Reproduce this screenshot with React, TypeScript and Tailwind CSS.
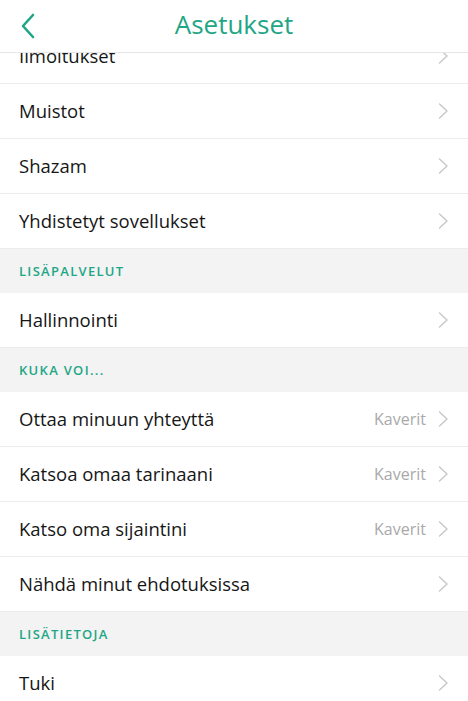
import React from "react";

const font = { fontFamily: '"Open Sans", "Noto Sans", sans-serif' };

function Chevron() {
  return (
    <svg width="11" height="16" viewBox="0 0 11 16" fill="none" className="shrink-0">
      <path d="M1.5 1 L9 8 L1.5 15" stroke="#c7c7c7" strokeWidth="1.4" strokeLinecap="round" strokeLinejoin="round" />
    </svg>
  );
}

function Row({ label, value }: { label: string; value?: string }) {
  return (
    <div className="flex h-[55px] items-center justify-between border-b border-[#ececec] bg-white pl-[19px] pr-[19px]">
      <span className="text-[18.5px] text-[#161616]">{label}</span>
      <div className="flex items-center gap-[12px]">
        {value && <span className="text-[16px] text-[#a9a9a9]">{value}</span>}
        <Chevron />
      </div>
    </div>
  );
}

function Section({ title }: { title: string }) {
  return (
    <div className="flex h-[44px] items-center bg-[#f3f3f3] pl-[19px] pt-[2px]">
      <span className="text-[13px] font-semibold tracking-[0.1em] text-[#1fa686]">{title}</span>
    </div>
  );
}

export default function App() {
  return (
    <div style={font} className="flex h-[701px] w-[468px] flex-col overflow-hidden bg-white">
      <div className="relative z-10 flex h-[53px] shrink-0 items-center justify-center border-b border-[#e6e6e6] bg-white">
        <svg className="absolute left-[19px] top-[12px]" width="18" height="28" viewBox="0 0 18 28" fill="none">
          <path d="M14 3 L4 14 L14 25" stroke="#1fa686" strokeWidth="2.6" strokeLinecap="round" strokeLinejoin="round" />
        </svg>
        <span className="pb-[4px] text-[26px] text-[#1fa686]">Asetukset</span>
      </div>
      <div className="flex-1 overflow-hidden">
        <div className="-mt-[24px]">
          <Row label="Ilmoitukset" />
          <Row label="Muistot" />
          <Row label="Shazam" />
          <Row label="Yhdistetyt sovellukset" />
          <Section title="LISÄPALVELUT" />
          <Row label="Hallinnointi" />
          <Section title="KUKA VOI..." />
          <Row label="Ottaa minuun yhteyttä" value="Kaverit" />
          <Row label="Katsoa omaa tarinaani" value="Kaverit" />
          <Row label="Katso oma sijaintini" value="Kaverit" />
          <Row label="Nähdä minut ehdotuksissa" />
          <Section title="LISÄTIETOJA" />
          <Row label="Tuki" />
        </div>
      </div>
    </div>
  );
}
